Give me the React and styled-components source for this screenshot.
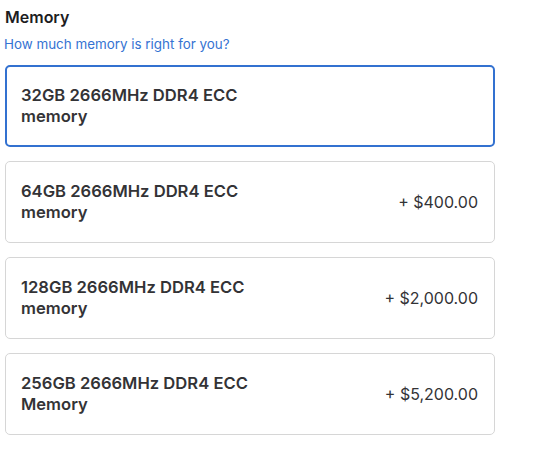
import React from "react";
import styled, { createGlobalStyle } from "styled-components";

const Global = createGlobalStyle`
  html, body { margin: 0; padding: 0; background: #ffffff; }
  body { font-family: Inter, "Liberation Sans", Arial, sans-serif; -webkit-font-smoothing: antialiased; }
`;

const Section = styled.section`
  width: 490px;
  padding: 7px 0 0 5px;
  display: flex;
  flex-direction: column;
`;

const Heading = styled.h2`
  margin: 0;
  font-size: 16px;
  line-height: 20px;
  font-weight: 600;
  color: #1d1d1f;
`;

const HelpLink = styled.a`
  margin: 9px 0 0 -1px;
  font-size: 13.4px;
  line-height: 16px;
  color: #3573d2;
  text-decoration: none;
  cursor: pointer;
`;

const Options = styled.div`
  margin-top: 13px;
  display: flex;
  flex-direction: column;
  gap: 14px;
`;

const Option = styled.button`
  box-sizing: border-box;
  height: 82px;
  width: 490px;
  display: flex;
  align-items: center;
  justify-content: space-between;
  padding: 0 ${(p) => (p.$selected ? 15 : 16)}px 0 ${(p) => (p.$selected ? 14 : 15)}px;
  border: ${(p) => (p.$selected ? "2px solid #3371d0" : "1px solid #d6d6d6")};
  border-radius: 5px;
  background: #fff;
  font-family: inherit;
  text-align: left;
  cursor: pointer;
`;

const Label = styled.span`
  max-width: 250px;
  font-size: 16.6px;
  line-height: 21px;
  font-weight: 600;
  color: #333336;
`;

const Price = styled.span`
  font-size: 16px;
  line-height: 21px;
  font-weight: 400;
  color: #333336;
`;

const options = [
  { label: ["32GB 2666MHz DDR4 ECC", "memory"], price: "", selected: true },
  { label: ["64GB 2666MHz DDR4 ECC", "memory"], price: "+ $400.00" },
  { label: ["128GB 2666MHz DDR4 ECC", "memory"], price: "+ $2,000.00" },
  { label: ["256GB 2666MHz DDR4 ECC", "Memory"], price: "+ $5,200.00" },
];

export default function App() {
  return (
    <>
      <Global />
      <Section>
        <Heading>Memory</Heading>
        <HelpLink>How much memory is right for you?</HelpLink>
        <Options>
          {options.map((o, i) => (
            <Option key={i} $selected={o.selected}>
              <Label>
                {o.label[0]}
                <br />
                {o.label[1]}
              </Label>
              {o.price && <Price>{o.price}</Price>}
            </Option>
          ))}
        </Options>
      </Section>
    </>
  );
}
